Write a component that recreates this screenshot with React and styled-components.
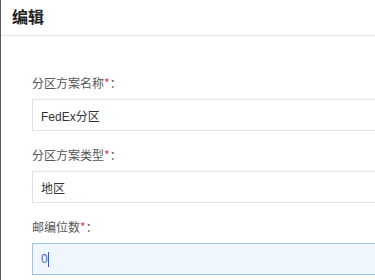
import React from "react";
import styled, { createGlobalStyle } from "styled-components";

const Global = createGlobalStyle`
  html, body { margin: 0; padding: 0; background: #fff; }
  body { font-family: "Liberation Sans", "Noto Sans CJK SC", sans-serif; overflow: hidden; }
`;

const Panel = styled.div`
  width: 375px;
  height: 280px;
  overflow: hidden;
  box-sizing: border-box;
  border-left: 1px solid #5a5a5a;
  background: #fff;
`;

const Header = styled.div`
  height: 35px;
  border-bottom: 1px solid #e5e5e5;
  display: flex;
  align-items: center;
  padding-left: 11px;
`;

const Title = styled.h3`
  margin: 0;
  font-size: 16px;
  font-weight: bold;
  color: #222;
  font-family: "Noto Sans CJK SC", sans-serif;
  line-height: 20px;
  position: relative;
  top: -2px;
`;

const Form = styled.div`
  padding: 37px 0 0 31px;
  display: flex;
  flex-direction: column;
  gap: 14px;
`;

const Field = styled.div`
  display: flex;
  flex-direction: column;
  gap: 6px;
`;

const Label = styled.label`
  font-size: 12px;
  line-height: 20px;
  height: 20px;
  color: #555;
  font-family: "Noto Sans CJK SC", sans-serif;
`;

const Star = styled.span`
  color: #e4393c;
`;

const Input = styled.div`
  box-sizing: border-box;
  width: 420px;
  height: 32px;
  display: flex;
  align-items: center;
  padding-left: 8px;
  font-size: 12px;
  color: ${(p) => (p.$focus ? "#3f5fd0" : "#333")};
  background: ${(p) => (p.$focus ? "#eff6fe" : "#fff")};
  border: 1px solid ${(p) => (p.$focus ? "#9fc3e4" : "#e2e2e2")};
`;

const Caret = styled.span`
  display: inline-block;
  width: 1px;
  height: 15px;
  background: #1f5fe0;
  margin-left: 0px;
`;

export default function App() {
  return (
    <>
      <Global />
      <Panel>
        <Header>
          <Title>编辑</Title>
        </Header>
        <Form>
          <Field>
            <Label>分区方案名称<Star>*</Star>：</Label>
            <Input>FedEx分区</Input>
          </Field>
          <Field>
            <Label>分区方案类型<Star>*</Star>：</Label>
            <Input>地区</Input>
          </Field>
          <Field>
            <Label>邮编位数<Star>*</Star>：</Label>
            <Input $focus>0<Caret /></Input>
          </Field>
        </Form>
      </Panel>
    </>
  );
}
